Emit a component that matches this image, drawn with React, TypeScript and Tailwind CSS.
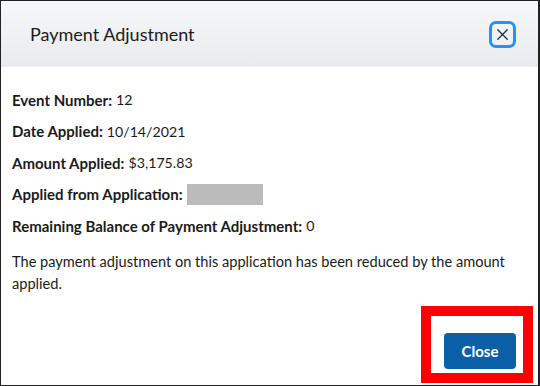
import { X } from "lucide-react";

const rows: { label: string; value: string | null }[] = [
  { label: "Event Number:", value: "12" },
  { label: "Date Applied:", value: "10/14/2021" },
  { label: "Amount Applied:", value: "$3,175.83" },
  { label: "Applied from Application:", value: null },
  { label: "Remaining Balance of Payment Adjustment:", value: "0" },
];

export default function App() {
  return (
    <div className="h-[386px] w-[540px] bg-white font-['Lato',sans-serif] text-[#1b1b1b]">
      <div className="flex h-full flex-col border border-[#222] border-r-2">
        {/* header */}
        <div className="flex h-[66px] items-center justify-between bg-gradient-to-b from-[#f6f7f9] to-[#e9ebee] pl-[29px] pr-[22px]">
          <h1 className="text-[18px] text-[#1b1b1b]">Payment Adjustment</h1>
          <button className="flex h-[27px] w-[27px] items-center justify-center rounded-[7px] border-[3px] border-[#2491ff] text-[#1b2f4a]">
            <X size={19} strokeWidth={1.5} />
          </button>
        </div>

        {/* body */}
        <div className="flex flex-col px-[11px] pt-[22px] text-[15px]">
          <div className="flex flex-col gap-[9.5px]">
            {rows.map((r) => (
              <div key={r.label} className="flex h-[22px] items-center gap-[4px]">
                <span className="font-bold">{r.label}</span>
                {r.value !== null ? (
                  <span className="text-[14.2px]">{r.value}</span>
                ) : (
                  <span className="h-[21px] w-[76px] bg-[#bbbbbb]" />
                )}
              </div>
            ))}
          </div>
          <p className="mt-[14px] text-[14.6px] leading-[22px]">
            The payment adjustment on this application has been reduced by the amount applied.
          </p>
        </div>

        {/* footer */}
        <div className="mt-auto mb-[2px] flex justify-end pr-[5px]">
          <div className="border-[10px] border-[#ff0000] pb-[4px] pl-[13px] pr-[7px] pt-[17px]">
            <button className="h-[36px] w-[72px] rounded-[4px] bg-[#0b5fa5] text-[15px] font-bold text-white">
              Close
            </button>
          </div>
        </div>
      </div>
    </div>
  );
}
